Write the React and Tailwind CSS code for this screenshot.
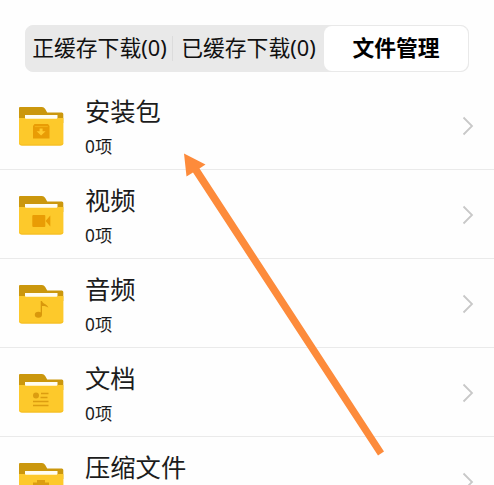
import React, { useState } from 'react';
import { clsx } from 'clsx';

const TABS = [
    { id: 'active', label: '正缓存下载', count: 0, width: 'w-[147px]' },
    { id: 'done', label: '已缓存下载', count: 0, width: 'w-[151px]' },
    { id: 'files', label: '文件管理', width: 'w-[144px]' },
];

const FOLDERS = [
    { id: 'apk', name: '安装包', count: 0 },
    { id: 'video', name: '视频', count: 0 },
    { id: 'audio', name: '音频', count: 0 },
    { id: 'doc', name: '文档', count: 0 },
    { id: 'zip', name: '压缩文件' },
];

function FolderGlyph({ type }) {
    if (type === 'apk') {
        return (
            <>
                <path d="M15.5 17H29l1.5 2v12.5H14V19z" fill="#e99c05" />
                <path d="M15.8 19.6h13" stroke="#f7b81b" strokeWidth="0.8" />
                <path d="M20.6 21.5h3v2.7h3l-4.500 4.300-4.500-4.300h3z" fill="#ffc82b" />
            </>
        );
    }
    if (type === 'video') {
        return (
            <g fill="#e99c05">
                <rect x="13.3" y="19" width="13" height="12" rx="1" />
                <path d="M26.6 25 31.3 19.4v11.2z" />
            </g>
        );
    }
    if (type === 'audio') {
        return (
            <g fill="#d9980c">
                <ellipse cx="19.4" cy="29.8" rx="3.6" ry="3" />
                <path d="M21.7 30V16H23c.5 2.8 5.4 3 6.400 6.800-1.600-1.400-4-2-6.400-1.700V30z" />
            </g>
        );
    }
    if (type === 'doc') {
        return (
            <>
                <circle cx="17" cy="21.5" r="3" fill="#dc9d10" />
                <path d="M22 19.5h7.500M21.500 23.500h7M14 27.500h15.500M14 31.500h15.500" stroke="#dc9d10" strokeWidth="1.7" />
            </>
        );
    }
    return (
        <path d="M18 17h8v2.500h4v12H14v-12h4z" fill="#dc9d10" />
    );
}

function FolderIcon({ type }) {
    return (
        <svg width="45" height="39" viewBox="0 0 45 39" className="shrink-0">
            <path d="M0 1Q0 0 1 0h22q2 0 3.200 2l2 3.500H42.800q1.500 0 1.500 1.500V16H0z" fill="#cb970d" />
            <rect x="6" y="8" width="32.5" height="8" fill="#fffdf3" />
            <path d="M0 11h5.500l1.500.8h30.500l1.500-.8h5.400V36q0 2.500-2.500 2.500H2.500Q0 38.500 0 36z" fill="#fdc92b" />
            <path d="M.6 36.500q.7 1.600 2.500 1.600h38.200q1.800 0 2.500-1.600" fill="none" stroke="#f4b91d" strokeWidth="0.8" />
            <FolderGlyph type={type} />
        </svg>
    );
}

function FolderRow({ folder }) {
    return (
        <li className="flex h-[89px] shrink-0 items-start border-b border-[#eaeaea] pl-[19px] pr-[20px]">
            <div className="pt-[26px]">
                <FolderIcon type={folder.id} />
            </div>
            <div className="ml-[21px] flex-1 pt-[13px] text-[#1c1c1c]">
                <p className="text-[25.3px] leading-[34px]">{folder.name}</p>
                {folder.count !== undefined && (
                    <p className="mt-[7px] text-[17.3px] leading-[24px]">{folder.count}项</p>
                )}
            </div>
            <svg width="12" height="20" viewBox="0 0 12 20" className="mt-[35px] shrink-0" fill="none" stroke="#c8c8c8" strokeWidth="1.8">
                <path d="m1.500 1.500 8.500 8.500-8.500 8.500" />
            </svg>
        </li>
    );
}

export default function App() {
    const [tab, setTab] = useState('files');

    return (
        <div className="relative flex h-screen w-full flex-col overflow-hidden bg-[#fefefe] font-['Noto_Sans','Noto_Sans_CJK_SC',sans-serif]">

            {/* Tabs */}
            <div className="ml-[25px] mt-[25px] flex h-[47px] w-[444px] shrink-0 rounded-[8px] border border-[#e9e9e9] bg-[#e9e9e9]">
                {TABS.map((t, i) => (
                    <button
                        key={t.id}
                        onClick={() => setTab(t.id)}
                        className={clsx(
                            'relative flex shrink-0 items-center justify-center whitespace-nowrap pb-[2px] text-[21.8px] leading-none text-[#111]',
                            t.width,
                            tab === t.id && 'rounded-[8px] bg-white font-bold text-black'
                        )}
                    >
                        {t.label}{t.count !== undefined && `(${t.count})`}
                        {i === 0 && <span className="absolute right-0 top-[10px] h-[25px] w-px bg-[#dcdcdc]" />}
                    </button>
                ))}
            </div>

            {/* Folders */}
            <ul className="mt-[9px] flex flex-col">
                {FOLDERS.map((f) => (
                    <FolderRow key={f.id} folder={f} />
                ))}
            </ul>

            {/* Pointer arrow */}
            <svg width="494" height="485" viewBox="0 0 494 485" className="pointer-events-none absolute left-0 top-0">
                <path d="M184 153.500 205.500 164.500 199.500 168.500 384 451.500 378 455.500 193 172.500 186.500 176.500z" fill="#fd8b3b" />
            </svg>
        </div>
    );
}
